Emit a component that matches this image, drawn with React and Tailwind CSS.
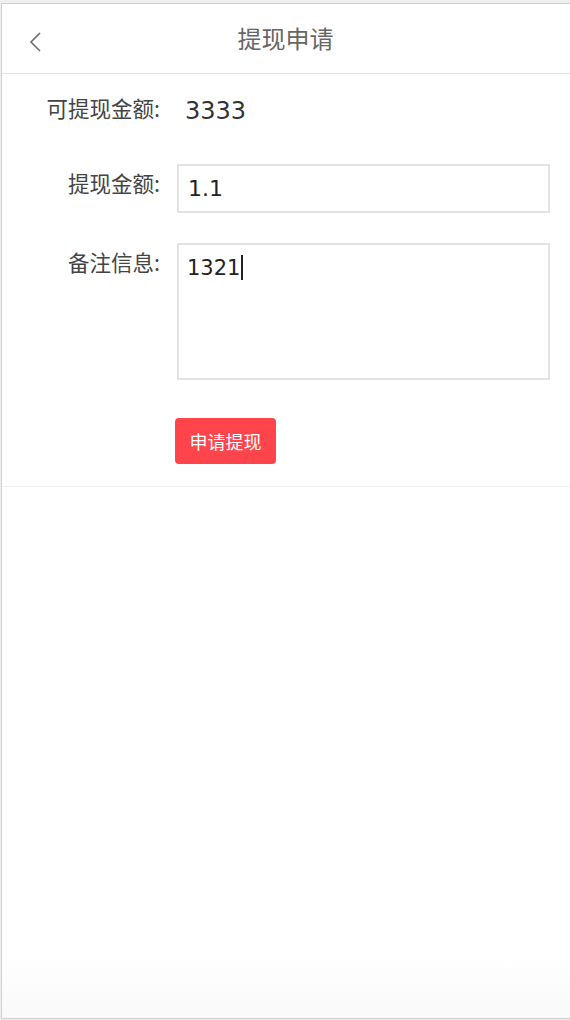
export default function App() {
  const font = { fontFamily: '"Noto Sans CJK SC", "DejaVu Sans", sans-serif' };
  return (
    <div className="w-[570px] h-[1020px] bg-[#efefef] pt-[3px] pl-[1px] overflow-hidden" style={font}>
      <div className="h-[1016px] w-[571px] border-l border-t border-b border-[#cfcfcf] bg-gradient-to-b from-white from-[94%] to-[#f9f9f9] flex flex-col">
        <div className="h-[70px] border-b border-[#e3e3e3] bg-white relative flex items-center justify-center shrink-0">
          <svg className="absolute left-[25px] top-[26px]" width="16" height="24" viewBox="0 0 16 24" fill="none">
            <path d="M13 3 L4 12 L13 21" stroke="#6b6b6b" strokeWidth="1.6" />
          </svg>
          <span className="text-[24px] text-[#666] mr-[3px] -mt-[1px]">提现申请</span>
        </div>
        <div className="bg-white border-b border-[#f0f0f0] pb-[22px]">
          <div className="flex items-start pt-[19px]">
            <div className="w-[158px] text-right text-[21.5px] text-[#444] leading-[30px]">可提现金额:</div>
            <div className="ml-[25px] text-[24px] text-[#333] leading-[36px]" style={{ fontFamily: '"DejaVu Sans", sans-serif' }}>3333</div>
          </div>
          <div className="flex items-start mt-[35px]">
            <div className="w-[158px] text-right text-[21.5px] text-[#444] leading-[30px] pt-[4px]">提现金额:</div>
            <div className="ml-[17px] w-[373px] h-[49px] border-2 border-[#e2e2e2] px-[9px] flex items-center text-[22px] text-[#222]" style={{ fontFamily: '"DejaVu Sans", sans-serif' }}>1.1</div>
          </div>
          <div className="flex items-start mt-[30px]">
            <div className="w-[158px] text-right text-[21.5px] text-[#444] leading-[30px] pt-[4px]">备注信息:</div>
            <div className="ml-[17px] w-[373px] h-[137px] border-2 border-[#e2e2e2] px-[8px] pt-[8px] text-[21px] text-[#222] leading-[30px]" style={{ fontFamily: '"DejaVu Sans", sans-serif' }}>
              1321<span className="inline-block w-[1.5px] h-[25px] bg-[#222] align-middle ml-[1px] -mt-[3px]"></span>
            </div>
          </div>
          <div className="ml-[173px] mt-[38px]">
            <button className="w-[101px] h-[46px] rounded-[4px] bg-[#ff454b] text-white text-[18px]">申请提现</button>
          </div>
        </div>
      </div>
    </div>
  );
}
